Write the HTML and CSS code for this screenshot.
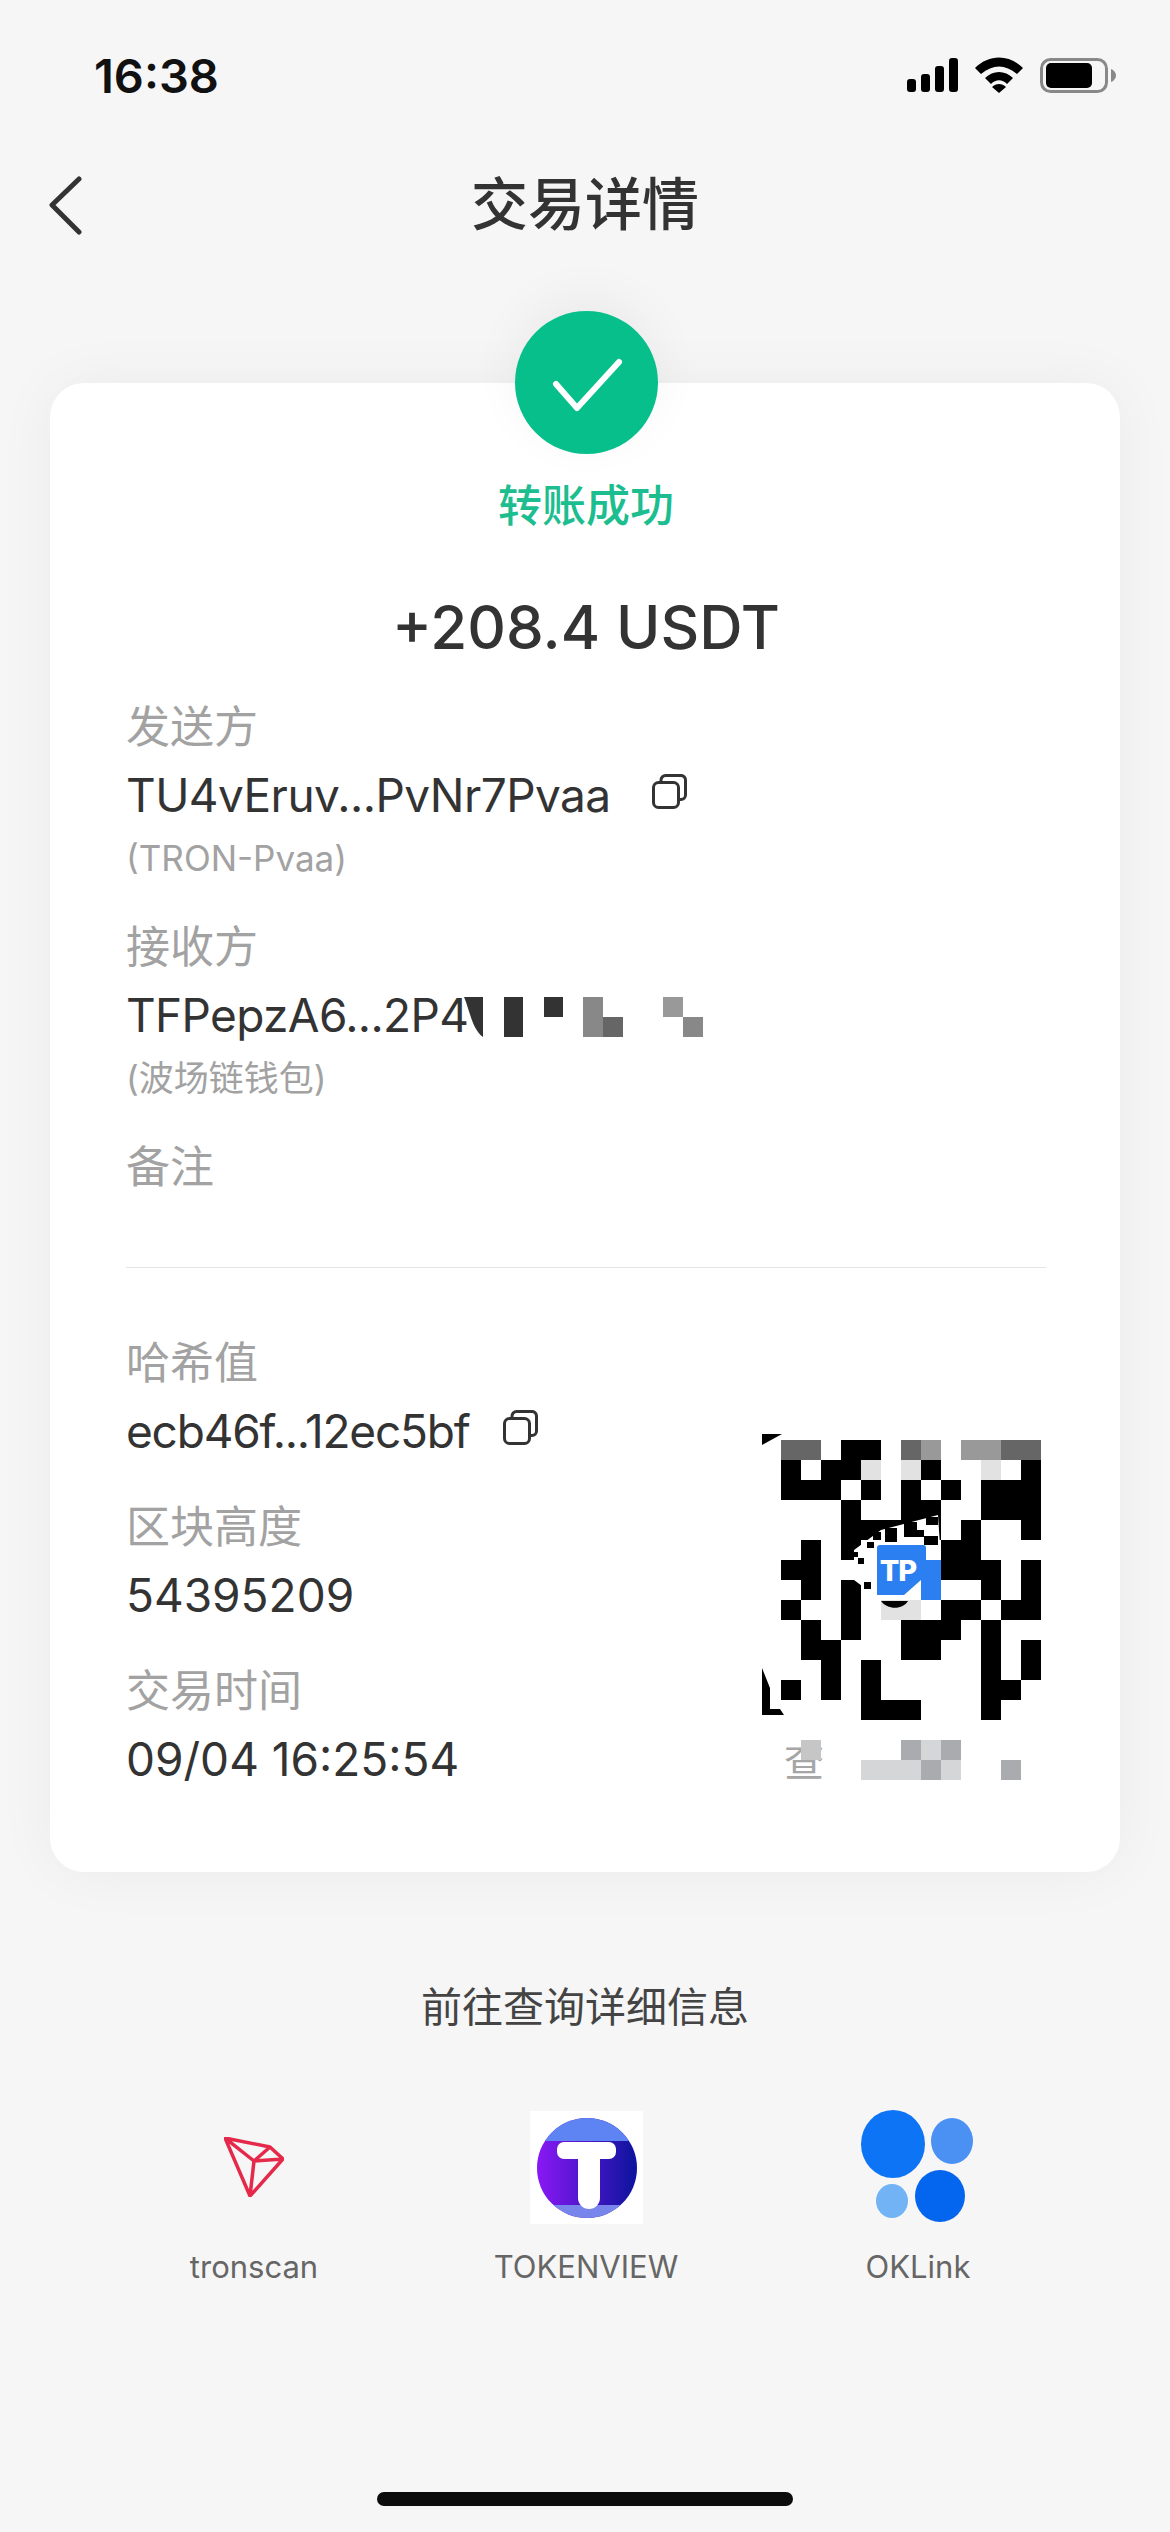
FILE: index.html
```html
<!DOCTYPE html>
<html lang="zh-CN">
<head>
  <meta charset="UTF-8" />
  <meta name="viewport" content="width=device-width, initial-scale=1.0" />
  <title>交易详情</title>
  <link rel="stylesheet" href="styles.css">
</head>
<body>
  <!-- Status bar -->
  <div class="status-bar">
    <span class="status-time">16:38</span>
    <div class="status-icons">
      <svg class="icon-signal" viewBox="0 0 51 34"><rect x="0" y="21" width="9" height="13" rx="3"/><rect x="14" y="16" width="9" height="18" rx="3"/><rect x="28" y="8" width="9" height="26" rx="3"/><rect x="42" y="0" width="9" height="34" rx="3"/></svg>
      <svg class="icon-wifi" viewBox="0 0 48 36"><path d="M0 11C14-3 34-3 48 11L42 17C30 7 18 7 6 17Z"/><path d="M10 21C18 13 30 13 38 21L32 27C27 22 21 22 16 27Z"/><path d="M17 30C21 26 27 26 31 30L24 36Z"/></svg>
      <svg class="icon-battery" viewBox="0 0 76 35"><rect class="batt-shell" x="1.5" y="1.5" width="65" height="32" rx="9"/><rect x="6" y="5" width="46" height="25" rx="5"/><path class="batt-nub" d="M71 11C74 12 76 15 76 17.500C76 20 74 23 71 24Z"/></svg>
    </div>
  </div>

  <!-- Nav -->
  <header class="topbar">
    <svg class="icon-back" viewBox="0 0 36 60"><path d="M32 4 5 30l27 27"/></svg>
    <h1>交易详情</h1>
  </header>

  <main class="card">
    <div class="result-mark">
      <svg viewBox="0 0 143 143"><path d="M41 73 62 97 104 51"/></svg>
    </div>
    <p class="result-text">转账成功</p>
    <p class="amount">+208.4 USDT</p>

    <section class="parties">
      <div class="field">
        <div class="field-label">发送方</div>
        <div class="field-value addr-from">TU4vEruv...PvNr7Pvaa
          <svg class="icon-copy" viewBox="0 0 35 35"><rect x="1.500" y="8.500" width="25" height="25" rx="5"/><path d="M9 8V6a4.500 4.500 0 0 1 4.500-4.500h15A4.500 4.500 0 0 1 33.500 6v15a4.500 4.500 0 0 1-4.500 4.500h-2.500"/></svg>
        </div>
        <div class="field-note">(TRON-Pvaa)</div>
      </div>
      <div class="field">
        <div class="field-label">接收方</div>
        <div class="field-value addr-to">TFPepzA6...2P4<svg class="mosaic-addr" viewBox="0 0 240 40"><path fill="#333" d="M0 0H19V40C8 32 6 14 0 0Z"/><rect x="40" y="0" width="19" height="40" fill="#333"/><rect x="80" y="0" width="19" height="20" fill="#333"/><rect x="119" y="0" width="20" height="40" fill="#888"/><rect x="139" y="20" width="20" height="20" fill="#666"/><rect x="199" y="0" width="20" height="20" fill="#999"/><rect x="219" y="20" width="20" height="20" fill="#888"/></svg></div>
        <div class="field-note">(波场链钱包)</div>
      </div>
      <div class="field">
        <div class="field-label">备注</div>
      </div>
    </section>

    <hr class="divider">

    <section class="chain">
      <div class="chain-fields">
        <div class="field-tight">
          <div class="field-label">哈希值</div>
          <div class="field-value addr-hash">ecb46f...12ec5bf
            <svg class="icon-copy" viewBox="0 0 35 35"><rect x="1.500" y="8.500" width="25" height="25" rx="5"/><path d="M9 8V6a4.500 4.500 0 0 1 4.500-4.500h15A4.500 4.500 0 0 1 33.500 6v15a4.500 4.500 0 0 1-4.500 4.500h-2.500"/></svg>
          </div>
        </div>
        <div class="field-tight">
          <div class="field-label">区块高度</div>
          <div class="field-value">54395209</div>
        </div>
        <div class="field-tight">
          <div class="field-label">交易时间</div>
          <div class="field-value">09/04 16:25:54</div>
        </div>
      </div>

      <!-- QR code, pixelated in the source -->
      <svg class="qr" viewBox="0 0 282 364">
        <path d="M1 4H21L1 15Z"/>
        <path d="M1 238 9 258V279H19L23 285H1Z"/>
        <path d="M80 10h40v20h-40z M20 30h20v20h-20z M60 30h40v20h-40z M160 30h20v20h-20z M260 30h20v20h-20z
          M20 50h60v20h-60z M100 50h20v20h-20z M140 50h20v20h-20z M180 50h20v20h-20z M220 50h60v20h-60z
          M80 70h20v20h-20z M140 70h40v20h-40z M220 70h60v20h-60z
          M80 90h100v20h-100z M200 90h20v20h-20z M260 90h20v20h-20z
          M40 110h20v20h-20z M80 110h20v20h-20z M180 110h40v20h-40z
          M20 130h40v20h-40z M180 130h60v20h-60z M260 130h20v20h-20z
          M40 150h20v20h-20z M80 150h20v20h-20z M220 150h20v20h-20z M260 150h20v20h-20z
          M20 170h20v20h-20z M80 170h20v20h-20z M180 170h40v20h-40z M240 170h40v20h-40z
          M40 190h20v20h-20z M80 190h20v20h-20z M140 190h60v20h-60z M220 190h20v20h-20z
          M40 210h40v20h-40z M140 210h40v20h-40z M220 210h20v20h-20z M260 210h20v20h-20z
          M60 230h20v20h-20z M100 230h20v20h-20z M220 230h20v20h-20z M260 230h20v20h-20z
          M20 250h20v20h-20z M60 250h20v20h-20z M100 250h20v20h-20z M220 250h40v20h-40z
          M100 270h60v20h-60z M220 270h20v20h-20z"/>
        <g fill="#666"><rect x="20" y="10" width="40" height="20"/><rect x="140" y="10" width="20" height="20"/><rect x="240" y="10" width="40" height="20"/></g>
        <g fill="#999"><rect x="160" y="10" width="20" height="20"/><rect x="200" y="10" width="40" height="20"/></g>
        <g fill="#e2e2e2"><rect x="100" y="30" width="20" height="20"/><rect x="140" y="30" width="20" height="20"/><rect x="220" y="30" width="20" height="20"/><rect x="120" y="170" width="40" height="20"/></g>
        <!-- logo -->
        <path fill="#fff" d="M93 120 120 100 177 85 180 130H160V170H120L93 150Z"/>
        <path d="M112 102h8v8h-8z M124 98h12v14h-12z M143 92h13v15h-13z M156 100h7v7h-7z M165 87h12v8h-12z M163 106h14v9h-14z M106 112h7v6h-7z M93 122h4v5h-4z M97 128h6v6h-6z M103 152h7v7h-7z"/>
        <path fill="#2b7ff0" d="M116 118a3 3 0 0 1 3-3h43a3 3 0 0 1 3 3v12h15v40h-20v-20l-17 15h-27Z"/>
        <text class="qr-tp" x="137" y="151">TP</text>
        <path d="M120 171H147C142 180 126 180 120 171Z"/>
        <!-- caption under the code -->
        <text class="qr-caption" x="23" y="346">查</text>
        <rect fill="#fff" x="20" y="290" width="50" height="21"/>
        <rect fill="#c6c6c6" x="40" y="310" width="20" height="20"/>
        <g fill="#a9abae"><rect x="140" y="310" width="20" height="20"/><rect x="180" y="310" width="20" height="20"/><rect x="160" y="330" width="20" height="20"/><rect x="240" y="330" width="20" height="20"/></g>
        <g fill="#d4d6d8"><rect x="160" y="310" width="20" height="20"/><rect x="100" y="330" width="60" height="20"/><rect x="180" y="330" width="20" height="20"/></g>
      </svg>
    </section>
  </main>

  <h2 class="explorer-title">前往查询详细信息</h2>
  <div class="explorers">
    <div class="explorer">
      <div class="explorer-icon">
        <svg class="logo-tron" viewBox="0 0 60 60"><path d="M1 1 46 10 59 22 26 59Z M1 1 30 24 26 59 M30 24 46 10 M30 24 59 22"/></svg>
      </div>
      <span>tronscan</span>
    </div>
    <div class="explorer">
      <div class="explorer-icon">
        <svg class="logo-tokenview" viewBox="0 0 113 113">
          <defs>
            <linearGradient id="tv-mid"><stop offset="0" stop-color="#8a18f5"/><stop offset="1" stop-color="#0b149c"/></linearGradient>
            <clipPath id="tv-round"><circle cx="57" cy="57" r="50"/></clipPath>
          </defs>
          <rect width="113" height="113" fill="#fff"/>
          <g clip-path="url(#tv-round)">
            <rect x="7" y="7" width="100" height="100" fill="url(#tv-mid)"/>
            <rect x="7" y="7" width="100" height="23" fill="#5d84f2"/>
            <rect x="7" y="94" width="100" height="13" fill="#7885ea"/>
          </g>
          <path fill="#fff" d="M34 31H79a7 7 0 0 1 7 7V41a7 7 0 0 1-7 7H70V87a8 8 0 0 1-22 0V48H34a7 7 0 0 1-7-7V38a7 7 0 0 1 7-7Z"/>
        </svg>
      </div>
      <span>TOKENVIEW</span>
    </div>
    <div class="explorer">
      <div class="explorer-icon">
        <svg class="logo-oklink" viewBox="0 0 114 114">
          <ellipse cx="32" cy="34" rx="32" ry="34" fill="#0d74f5"/>
          <ellipse cx="91" cy="31" rx="21" ry="23" fill="#4a91f3"/>
          <ellipse cx="31" cy="91" rx="16" ry="17" fill="#72b3f6"/>
          <ellipse cx="79" cy="86" rx="25" ry="26" fill="#0466ee"/>
        </svg>
      </div>
      <span>OKLink</span>
    </div>
  </div>

  <div class="home-bar"></div>
</body>
</html>
```

FILE: styles.css
```css
* { box-sizing: border-box; margin: 0; padding: 0; }
html, body { height: 100%; }
body {
  display: flex;
  flex-direction: column;
  height: 2532px;
  overflow: hidden;
  background: #f6f6f6;
  color: #333;
  font-family: Inter, "Noto Sans CJK SC", sans-serif;
}
/* Status bar */
.status-bar {
  height: 150px;
  padding: 0 54px 0 94px;
  display: flex;
  justify-content: space-between;
  align-items: center;
}
.status-time { font-size: 47px; font-weight: 600; color: #111; }
.status-icons { display: flex; align-items: center; gap: 17px; }
.icon-signal { width: 51px; height: 34px; }
.icon-wifi { width: 48px; height: 36px; }
.icon-battery { width: 76px; height: 35px; }
.batt-shell { fill: none; stroke: #888; stroke-width: 3; }
.batt-nub { fill: #888; }
/* Nav */
.topbar {
  height: 110px;
  position: relative;
  display: flex;
  align-items: center;
  justify-content: center;
}
.topbar h1 { font-size: 57px; font-weight: 500; line-height: 110px; color: #333; }
.icon-back {
  position: absolute;
  left: 47px;
  top: 25px;
  width: 36px;
  height: 60px;
  fill: none;
  stroke: #333;
  stroke-width: 5;
  stroke-linecap: round;
  stroke-linejoin: round;
}
/* Card */
.card {
  margin: 123px 50px 0;
  padding: 0 74px 75px 76px;
  background: #fff;
  border-radius: 34px;
  box-shadow: 0 0 60px rgba(0,0,0,0.05);
}
.result-mark {
  width: 143px;
  height: 143px;
  margin: -72px auto 0;
  border-radius: 50%;
  background: #07bf8b;
  box-shadow: 0 -14px 50px rgba(0,0,0,0.05);
}
.result-mark svg {
  display: block;
  width: 143px;
  height: 143px;
  fill: none;
  stroke: #fff;
  stroke-width: 6;
  stroke-linecap: round;
  stroke-linejoin: round;
}
.result-text {
  margin-top: 22px;
  font-size: 44px;
  font-weight: 500;
  line-height: 60px;
  text-align: center;
  color: #1cbd8e;
}
.amount {
  margin-top: 51px;
  font-size: 60px;
  font-weight: 500;
  line-height: 80px;
  text-align: center;
}
.parties { margin-top: 30px; }
.field + .field { margin-top: 34px; }
.field-tight + .field-tight { margin-top: 28px; }
.field-label { font-size: 44px; line-height: 60px; color: #a2a2a2; }
.field-value {
  display: flex;
  align-items: center;
  font-size: 46px;
  line-height: 76px;
  color: #333;
  white-space: nowrap;
}
.addr-from { letter-spacing: -0.55px; }
.addr-to { letter-spacing: -0.65px; }
.addr-hash { letter-spacing: -1.2px; }
.field-note { font-size: 35px; line-height: 50px; color: #a2a2a2; }
.icon-copy {
  width: 35px;
  height: 35px;
  margin: -8px 0 0 41px;
  fill: none;
  stroke: #333;
  stroke-width: 3;
  stroke-linejoin: round;
}
.field-tight .icon-copy { margin-left: 33px; }
.mosaic-addr { width: 240px; height: 40px; margin: 4px 0 0 -4px; }
.divider { margin-top: 70px; border: none; border-top: 1px solid #e3e3e3; }
/* Hash + QR */
.chain {
  margin-top: 65px;
  display: flex;
  justify-content: space-between;
  align-items: flex-start;
}
.qr { width: 282px; height: 364px; margin: 97px 3px 0 0; }
.qr-tp { font-size: 29px; font-weight: 800; fill: #fff; text-anchor: middle; letter-spacing: -1px; }
.qr-caption { font-size: 40px; fill: #a6a6a6; }
/* Explorer links */
.explorer-title {
  margin-top: 105px;
  font-size: 41px;
  font-weight: 400;
  line-height: 60px;
  text-align: center;
  color: #444;
}
.explorers {
  margin: 73px 86px 0 88px;
  display: grid;
  grid-template-columns: repeat(3, 1fr);
}
.explorer { display: flex; flex-direction: column; align-items: center; }
.explorer-icon { height: 114px; display: flex; align-items: center; justify-content: center; }
.explorer span { margin-top: 21px; font-size: 31px; line-height: 44px; color: #666; }
.logo-tron { width: 60px; height: 60px; fill: none; stroke: #e5294a; stroke-width: 3.5; stroke-linejoin: round; }
.logo-tokenview { width: 113px; height: 113px; }
.logo-oklink { width: 114px; height: 114px; }
/* Home indicator */
.home-bar {
  width: 416px;
  height: 14px;
  margin: auto auto 26px;
  border-radius: 7px;
  background: #0c0c0c;
}
```
